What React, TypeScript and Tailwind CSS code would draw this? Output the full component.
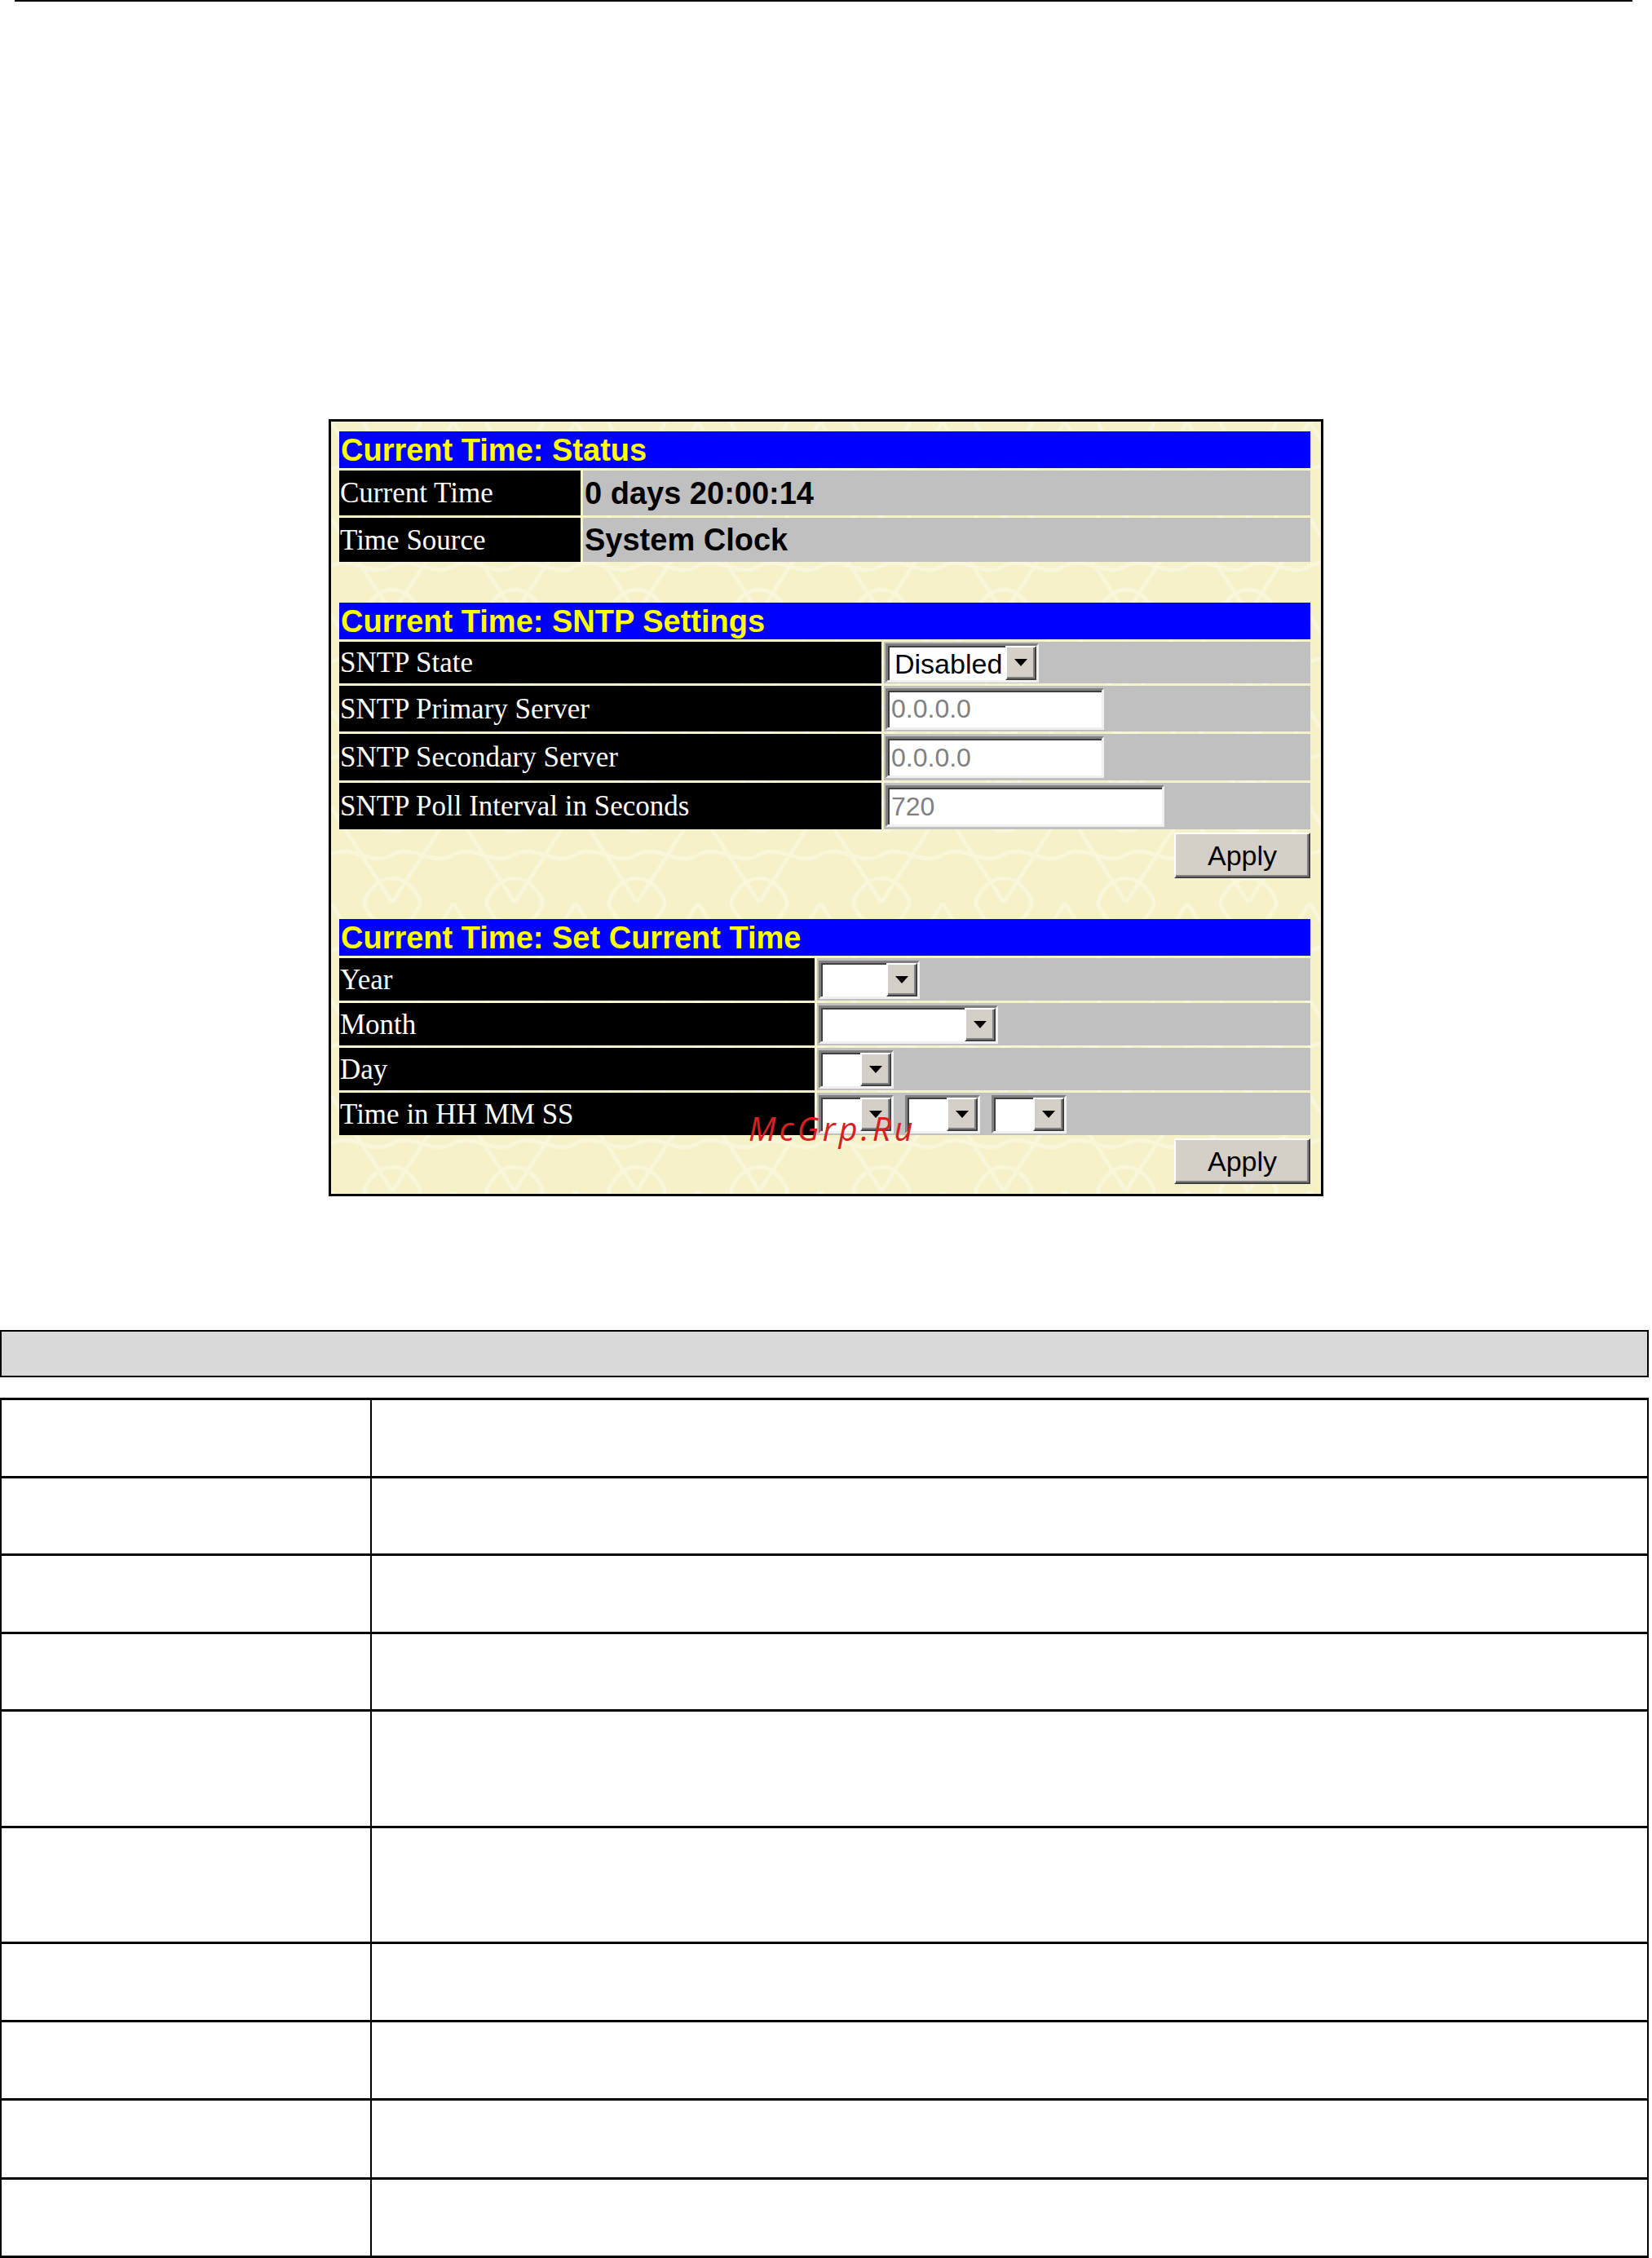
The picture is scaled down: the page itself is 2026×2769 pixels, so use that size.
const sans = "font-['Liberation_Sans',Arial,sans-serif]";
const serif = "font-['Liberation_Serif','Times_New_Roman',serif]";

function Header({ title }: { title: string }) {
  return (
    <div className={`flex h-[45px] items-center bg-[#0000ff] pl-[2px] text-[38px] font-bold leading-none text-[#ffff00] ${sans}`}>
      {title}
    </div>
  );
}

function Arrow() {
  return (
    <svg width="16" height="9" viewBox="0 0 16 9">
      <polygon points="0,0 16,0 8,9" fill="#000" />
    </svg>
  );
}

function Select({ w, h = 'h-[48px]', value = '' }: { w: string; h?: string; value?: string }) {
  return (
    <div className={`flex ${w} ${h} border-[3px] border-t-[#808080] border-l-[#808080] border-b-[#f0f0f0] border-r-[#f0f0f0] bg-white shadow-[inset_2px_2px_0_#404040]`}>
      <div className={`flex flex-1 items-center pl-[8px] pt-[2px] text-[34px] leading-none text-black ${sans}`}>{value}</div>
      <div className="flex w-[38px] items-center justify-center border-[2px] border-t-white border-l-white border-b-[#404040] border-r-[#404040] bg-[#d4d0c8] shadow-[inset_-2px_-2px_0_#808080]">
        <Arrow />
      </div>
    </div>
  );
}

function TextInput({ w, value }: { w: string; value: string }) {
  return (
    <div className={`flex ${w} h-[51px] items-center border-[3px] border-t-[#808080] border-l-[#808080] border-b-[#f0f0f0] border-r-[#f0f0f0] bg-white pl-[4px] shadow-[inset_2px_2px_0_#404040] text-[32px] leading-none text-[#808080] ${sans}`}>
      {value}
    </div>
  );
}

function ApplyButton() {
  return (
    <div className="flex justify-end">
      <div className={`flex h-[56px] w-[167px] items-center justify-center border-[2px] border-t-white border-l-white border-b-[#404040] border-r-[#404040] bg-[#d4d0c8] shadow-[inset_-2px_-2px_0_#808080] text-[34px] leading-none text-black ${sans}`}>
        Apply
      </div>
    </div>
  );
}

function Row({ cols, h, label, children }: { cols: string; h: string; label: string; children: React.ReactNode }) {
  return (
    <div className={`grid ${cols} ${h} gap-[3px]`}>
      <div className={`flex items-center bg-black pl-[1px] text-[35px] leading-none text-white ${serif}`}>{label}</div>
      <div className="flex items-center bg-[#c0c0c0] pl-[2px]">{children}</div>
    </div>
  );
}

function Pattern() {
  return (
    <svg className="absolute inset-0 h-full w-full" aria-hidden="true">
      <defs>
        <pattern id="dl" width="150" height="118" patternUnits="userSpaceOnUse">
          <rect width="150" height="118" fill="#f5f1c8" />
          <g fill="none" stroke="#f9f6da" strokeWidth="5">
            <path d="M0 0 C 30 50, 45 70, 75 118" />
            <path d="M150 0 C 120 50, 105 70, 75 118" />
            <path d="M40 0 C 55 40, 95 40, 110 0" />
            <path d="M40 118 C 55 78, 95 78, 110 118" />
            <path d="M0 59 C 25 45, 50 75, 75 59 C 100 45, 125 75, 150 59" />
          </g>
        </pattern>
      </defs>
      <rect width="100%" height="100%" fill="url(#dl)" />
    </svg>
  );
}

const tableRows = ['h-[96px]', 'h-[95px]', 'h-[96px]', 'h-[95px]', 'h-[143px]', 'h-[142px]', 'h-[96px]', 'h-[96px]', 'h-[97px]', 'h-[96px]'];

export default function App() {
  return (
    <div className="relative min-h-[2769px] bg-white">
      <div className="ml-[18px] h-[2px] w-[1984px] bg-black" />

      <div className="relative mx-auto mt-[512px] w-[1220px] border-[3px] border-black">
        <Pattern />
        <div className="relative flex flex-col pb-[12px] pl-[10px] pr-[13px] pt-[12px]">
          <div className="flex flex-col gap-[3px]">
            <Header title="Current Time: Status" />
            <Row cols="grid-cols-[296px_1fr]" h="h-[55px]" label="Current Time">
              <span className={`text-[38px] font-bold leading-none text-black ${sans}`}>0 days 20:00:14</span>
            </Row>
            <Row cols="grid-cols-[296px_1fr]" h="h-[54px]" label="Time Source">
              <span className={`text-[38px] font-bold leading-none text-black ${sans}`}>System Clock</span>
            </Row>
          </div>

          <div className="mt-[50px] flex flex-col gap-[3px]">
            <Header title="Current Time: SNTP Settings" />
            <Row cols="grid-cols-[665px_1fr]" h="h-[51px]" label="SNTP State">
              <Select w="w-[188px]" value="Disabled" />
            </Row>
            <Row cols="grid-cols-[665px_1fr]" h="h-[56px]" label="SNTP Primary Server">
              <TextInput w="w-[268px]" value="0.0.0.0" />
            </Row>
            <Row cols="grid-cols-[665px_1fr]" h="h-[57px]" label="SNTP Secondary Server">
              <TextInput w="w-[268px]" value="0.0.0.0" />
            </Row>
            <Row cols="grid-cols-[665px_1fr]" h="h-[57px]" label="SNTP Poll Interval in Seconds">
              <TextInput w="w-[342px]" value="720" />
            </Row>
            <div className="mt-[1px]">
              <ApplyButton />
            </div>
          </div>

          <div className="mt-[50px] flex flex-col gap-[3px]">
            <Header title="Current Time: Set Current Time" />
            <Row cols="grid-cols-[583px_1fr]" h="h-[52px]" label="Year">
              <Select w="w-[124px]" h="h-[47px]" />
            </Row>
            <Row cols="grid-cols-[583px_1fr]" h="h-[52px]" label="Month">
              <Select w="w-[220px]" h="h-[47px]" />
            </Row>
            <Row cols="grid-cols-[583px_1fr]" h="h-[52px]" label="Day">
              <Select w="w-[92px]" h="h-[47px]" />
            </Row>
            <Row cols="grid-cols-[583px_1fr]" h="h-[52px]" label="Time in HH MM SS">
              <div className="flex gap-[14px]">
                <Select w="w-[92px]" h="h-[47px]" />
                <Select w="w-[92px]" h="h-[47px]" />
                <Select w="w-[92px]" h="h-[47px]" />
              </div>
            </Row>
            <div className="mt-[1px]">
              <ApplyButton />
            </div>
          </div>
        </div>
      </div>

      <div className="mt-[164px] h-[58px] w-[2022px] border-2 border-black bg-[#d9d9d9]" />

      <div className="mt-[25px] w-[2022px] border-x-2 border-t-[3px] border-black">
        {tableRows.map((h, i) => (
          <div key={i} className={`flex ${h} border-b-[3px] border-black`}>
            <div className="w-[454px] border-r-2 border-black" />
            <div className="flex-1" />
          </div>
        ))}
      </div>

      <div className="absolute left-[918px] top-[1364px] text-[40px] italic leading-none tracking-[4px] text-[#d82020] font-['Open_Sans',sans-serif]">
        McGrp.Ru
      </div>
    </div>
  );
}
